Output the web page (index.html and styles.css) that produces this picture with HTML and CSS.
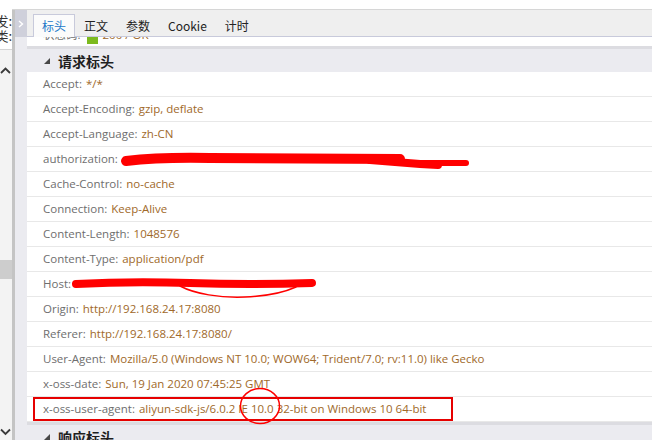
FILE: index.html
```html
<!DOCTYPE html>
<html lang="zh-CN">
<head>
<meta charset="utf-8">
<title>标头</title>
<link rel="stylesheet" href="styles.css">
</head>
<body>
<div class="top"></div>
<div class="main">
  <div class="side">
    <div class="side-top">
      <div class="clip">开发:</div>
      <div class="clip">分类:</div>
    </div>
    <svg class="chev-up" width="11" height="8" viewBox="0 0 11 8"><path d="M1 7 L5.5 2.5 L10 7" fill="none" stroke="#3a3a3a" stroke-width="1.8"/></svg>
    <div class="thumb"></div>
    <svg class="chev-down" width="11" height="8" viewBox="0 0 11 8"><path d="M1 1.5 L5.5 6 L10 1.5" fill="none" stroke="#3a3a3a" stroke-width="1.8"/></svg>
  </div>
  <div class="frame">
    <div class="split"></div>
    <div class="rail">
      <div class="rail-top"><svg width="6" height="8" viewBox="0 0 6 8"><path d="M1 1 L4.5 4 L1 7" fill="none" stroke="#ffffff" stroke-width="1.4"/></svg></div>
    </div>
    <div class="panel">
      <div class="tabs">
        <div class="tab active">标头</div>
        <div class="tab">正文</div>
        <div class="tab">参数</div>
        <div class="tab">Cookie</div>
        <div class="tab">计时</div>
      </div>
      <div class="status">
        <div class="status-row"><span class="k">状态码:</span><span class="sq"></span><span class="v">200 / OK</span></div>
      </div>
      <div class="sec"><span class="tri"></span><span class="sec-title">请求标头</span></div>
      <div class="row"><span class="k">Accept:</span> <span class="v">*/*</span></div>
      <div class="row"><span class="k">Accept-Encoding:</span> <span class="v">gzip, deflate</span></div>
      <div class="row"><span class="k">Accept-Language:</span> <span class="v">zh-CN</span></div>
      <div class="row"><span class="k">authorization:</span> <svg class="scrib-auth" width="352" height="22" viewBox="0 0 352 22"><g fill="none" stroke="#ff0000" stroke-linecap="round"><path d="M6 11 Q 40 7 90 8 L 280 9" stroke-width="10"/><path d="M250 10 L 300 14 L 318 15" stroke-width="8"/><path d="M300 13 L 346 13" stroke-width="6"/></g></svg></div>
      <div class="row"><span class="k">Cache-Control:</span> <span class="v">no-cache</span></div>
      <div class="row"><span class="k">Connection:</span> <span class="v">Keep-Alive</span></div>
      <div class="row"><span class="k">Content-Length:</span> <span class="v">1048576</span></div>
      <div class="row"><span class="k">Content-Type:</span> <span class="v">application/pdf</span></div>
      <div class="row host"><span class="k">Host:</span>
        <svg class="scrib-host" width="250" height="28" viewBox="0 0 250 28"><g fill="none" stroke="#ff0000" stroke-linecap="round"><path d="M6 11 Q 60 8 120 10 T 242 10" stroke-width="8"/><path d="M110 13 C 125 21 150 25 175 24 C 200 23 215 19 226 14" stroke-width="1.5"/></g></svg>
      </div>
      <div class="row"><span class="k">Origin:</span> <span class="v">http://192.168.24.17:8080</span></div>
      <div class="row"><span class="k">Referer:</span> <span class="v">http://192.168.24.17:8080/</span></div>
      <div class="row"><span class="k">User-Agent:</span> <span class="v">Mozilla/5.0 (Windows NT 10.0; WOW64; Trident/7.0; rv:11.0) like Gecko</span></div>
      <div class="row"><span class="k">x-oss-date:</span> <span class="v">Sun, 19 Jan 2020 07:45:25 GMT</span></div>
      <div class="row marked">
        <div class="box"><span class="k">x-oss-user-agent:</span> <span class="v">aliyun-sdk-js/6.0.2 IE 10.0 32-bit on Windows 10 64-bit</span>
          <svg class="ring" width="42" height="38" viewBox="0 0 42 38"><ellipse cx="21" cy="19" rx="19.5" ry="17.5" fill="none" stroke="#ff0000" stroke-width="1.5"/></svg>
        </div>
      </div>
      <div class="sec"><span class="tri"></span><span class="sec-title">响应标头</span></div>
    </div>
  </div>
</div>
</body>
</html>
```
FILE: styles.css
```css
html, body {
  margin: 0;
  padding: 0;
}
body {
  width: 652px;
  height: 440px;
  overflow: hidden;
  background: #ffffff;
  font-family: "Open Sans", "Noto Sans CJK SC", sans-serif;
  font-size: 11.5px;
  color: #6e6e6e;
}
.top {
  height: 9px;
  background: #ffffff;
}
.main {
  display: flex;
  height: 431px;
}
.side {
  width: 12px;
  display: flex;
  flex-direction: column;
  background: #f3f3f3;
}
.side > * {
  flex-shrink: 0;
}
.side-top {
  height: 36px;
  padding-top: 4px;
  background: #ffffff;
  border-bottom: 1px solid #d4d4d4;
}
.clip {
  display: flex;
  justify-content: flex-end;
  overflow: hidden;
  white-space: nowrap;
  font-family: "Noto Sans CJK SC", sans-serif;
  font-size: 13px;
  line-height: 15px;
  color: #333333;
}
.chev-up {
  margin-top: 16px;
}
.thumb {
  margin-top: 186px;
  height: 19px;
  background: #cdcdcd;
}
.chev-down {
  margin-top: auto;
  margin-bottom: 4px;
}
.frame {
  flex: 1;
  display: flex;
  border-top: 1px solid #d6d6d6;
}
.split {
  width: 3px;
  background: #c4c4c4;
}
.rail {
  width: 12px;
  background: #ebebf0;
}
.rail-top {
  height: 27px;
  background: #cfd0db;
  display: flex;
  align-items: center;
  justify-content: center;
}
.panel {
  flex: 1;
  display: flex;
  flex-direction: column;
  overflow: hidden;
}
.panel > * {
  flex-shrink: 0;
}
.tabs {
  height: 26px;
  background: #efefef;
  border-bottom: 1px solid #c8cadb;
  display: flex;
  align-items: flex-end;
  padding-left: 6px;
  font-family: "Noto Sans CJK SC", sans-serif;
  font-size: 12px;
  color: #222222;
}
.tab {
  height: 22px;
  line-height: 22px;
  padding: 0 8px;
  box-sizing: border-box;
  border: 1px solid transparent;
  border-bottom: none;
}
.tab.active {
  background: #fbfbfb;
  border-color: #c8cadb;
  color: #1e78c8;
  margin-bottom: -1px;
  height: 23px;
}
.status {
  height: 9px;
  overflow: hidden;
}
.status-row {
  margin-top: -14px;
  height: 24px;
  line-height: 24px;
  padding-left: 16px;
  display: flex;
  align-items: center;
  white-space: nowrap;
}
.sq {
  display: inline-block;
  width: 11px;
  height: 11px;
  background: #7cba1e;
  margin: 6px 5px 0 6px;
}
.k {
  color: #6e6e6e;
}
.v {
  color: #a0692a;
}
.sec {
  height: 23px;
  border-top: 3px solid #dcdce1;
  background: #ebebf0;
  display: flex;
  align-items: center;
  padding-left: 17px;
}
.tri {
  width: 0;
  height: 0;
  border-left: 6px solid transparent;
  border-bottom: 6px solid #474747;
  margin-right: 8px;
  margin-top: 1px;
}
.sec-title {
  font-family: "Noto Sans CJK SC", sans-serif;
  font-weight: bold;
  font-size: 14px;
  color: #1f1f1f;
}
.row {
  height: 24px;
  line-height: 24px;
  border-bottom: 1px solid #e8e8e8;
  padding-left: 16px;
  white-space: nowrap;
  display: flex;
  align-items: center;
}
.row .k + .v {
  margin-left: 4px;
}
.scrib-auth {
  margin-left: 2px;
  margin-top: 3px;
}
.host {
  position: relative;
}
.scrib-host {
  position: absolute;
  left: 43px;
  top: 1px;
}
.marked {
  padding-left: 6px;
}
.box {
  position: relative;
  width: 420px;
  height: 24px;
  box-sizing: border-box;
  border: 2px solid #e60000;
  padding-left: 8px;
  line-height: 20px;
  display: flex;
  align-items: center;
}
.ring {
  position: absolute;
  left: 204px;
  top: -12px;
}
```
